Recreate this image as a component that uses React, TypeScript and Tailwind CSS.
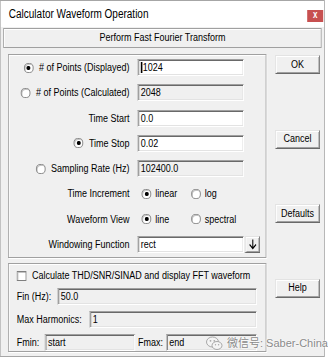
import clsx from "clsx";

// The dialog is laid out at its natural width and squeezed horizontally, as in the capture.

function Radio({ on }: { on?: boolean }) {
  return (
    <span className="flex h-[10px] w-[12px] shrink-0 items-center justify-center rounded-full border border-[#7f7f7f] bg-white shadow-[inset_1px_1px_0_#c4c4c4]">
      {on && <span className="h-[4px] w-[5px] rounded-full bg-black" />}
    </span>
  );
}

function Field({
  value,
  disabled,
  caret,
  className,
}: {
  value: string;
  disabled?: boolean;
  caret?: boolean;
  className?: string;
}) {
  return (
    <div
      className={clsx(
        "flex h-[17px] items-center border border-t-[#a0a0a0] border-l-[#a0a0a0] border-b-white border-r-white pl-[3px] shadow-[inset_1px_1px_0_#696969,inset_-1px_-1px_0_#e3e3e3]",
        disabled ? "bg-[#f0f0f0]" : "bg-white",
        className,
      )}
    >
      {caret && <span className="mr-[1px] h-[11px] w-[1.5px] bg-black" />}
      <span>{value}</span>
    </div>
  );
}

function Button({ label }: { label: string }) {
  return (
    <button
      type="button"
      className="flex h-[19px] w-[56px] items-center justify-center border border-t-[#e3e3e3] border-l-[#e3e3e3] border-b-[#696969] border-r-[#696969] bg-[#f0f0f0] shadow-[inset_1px_1px_0_#fff,inset_-1px_-1px_0_#a0a0a0]"
    >
      {label}
    </button>
  );
}

function Row({ children }: { children: React.ReactNode }) {
  return <div className="flex h-[25.25px] items-center">{children}</div>;
}

function Label({ text, radio }: { text: string; radio?: "on" | "off" }) {
  return (
    <div className="flex w-[151px] items-center justify-end gap-[7px]">
      {radio && <Radio on={radio === "on"} />}
      <span>{text}</span>
    </div>
  );
}

function Option({ text, on }: { text: string; on?: boolean }) {
  return (
    <div className="flex w-[62px] items-center gap-[5px]">
      <Radio on={on} />
      <span>{text}</span>
    </div>
  );
}

const groupBox =
  "border border-[#a0a0a0] shadow-[inset_1px_1px_0_#fff,1px_1px_0_#fff]";

export default function App() {
  return (
    <div className="relative h-[359px] w-[328px] overflow-hidden bg-white">
      <div className="h-[359px] w-[410px] origin-top-left scale-x-[0.8] font-['Liberation_Sans',Arial,sans-serif] text-[11.25px] leading-none text-black">
        <div className="flex h-[357px] w-[406px] flex-col border border-[#a6a6a6]">
          {/* title bar */}
          <div className="flex h-[26px] items-start justify-between bg-white">
            <span className="ml-[10px] mt-[7px] text-[12.5px]">Calculator Waveform Operation</span>
            <span className="mr-[1px] mt-[9px] flex h-[12px] w-[20px] items-center justify-center bg-[#c75050] pb-[2px] text-[10px] font-bold text-white">
              x
            </span>
          </div>

          <div className="flex flex-1 flex-col bg-[#f0f0f0] px-[3px] pt-[1px]">
            <div className="flex h-[20px] items-center justify-center border border-[#a0a0a0] shadow-[inset_1px_1px_0_#fff]">
              Perform Fast Fourier Transform
            </div>

            <div className="ml-[6px] mt-[6px] flex">
              <div className="flex w-[323px] flex-col">
                <div className={clsx("flex h-[204px] flex-col pl-0", groupBox)}>
                  <Row>
                    <Label text="# of Points (Displayed)" radio="on" />
                    <Field value="1024" caret className="ml-[10px] w-[133px] pl-[2px]" />
                  </Row>
                  <Row>
                    <Label text="# of Points (Calculated)" radio="off" />
                    <Field value="2048" disabled className="ml-[10px] w-[133px]" />
                  </Row>
                  <Row>
                    <Label text="Time Start" />
                    <Field value="0.0" className="ml-[10px] w-[133px]" />
                  </Row>
                  <Row>
                    <Label text="Time Stop" radio="on" />
                    <Field value="0.02" className="ml-[10px] w-[133px]" />
                  </Row>
                  <Row>
                    <Label text="Sampling Rate (Hz)" radio="off" />
                    <Field value="102400.0" disabled className="ml-[10px] w-[133px]" />
                  </Row>
                  <Row>
                    <Label text="Time Increment" />
                    <div className="ml-[10px] flex items-center pl-[5px]">
                      <Option text="linear" on />
                      <Option text="log" />
                    </div>
                  </Row>
                  <Row>
                    <Label text="Waveform View" />
                    <div className="ml-[10px] flex items-center pl-[5px]">
                      <Option text="line" on />
                      <Option text="spectral" />
                    </div>
                  </Row>
                  <Row>
                    <Label text="Windowing Function" />
                    <Field value="rect" className="ml-[10px] w-[133px]" />
                    <button
                      type="button"
                      className="ml-[1px] flex h-[17px] w-[19px] items-center justify-center border border-t-[#e3e3e3] border-l-[#e3e3e3] border-b-[#696969] border-r-[#696969] bg-[#f0f0f0] shadow-[inset_1px_1px_0_#fff,inset_-1px_-1px_0_#a0a0a0]"
                    >
                      <svg width="12" height="12" viewBox="0 0 12 12" fill="none" stroke="#000" strokeWidth="1.3">
                        <path d="M6 1.5V10.5M2 6.5L6 10.5L10 6.5" />
                      </svg>
                    </button>
                  </Row>
                </div>

                <div className={clsx("mt-[5px] flex h-[89px] flex-col pl-[10px] pr-[11px] pt-[2px]", groupBox)}>
                  <div className="flex h-[20px] items-center gap-[7px]">
                    <span className="h-[10px] w-[12px] border border-[#7f7f7f] bg-white shadow-[inset_1px_1px_0_#c4c4c4]" />
                    <span>Calculate THD/SNR/SINAD and display FFT waveform</span>
                  </div>
                  <div className="mt-[2px] flex flex-col gap-[6px]">
                    <div className="flex items-center">
                      <span className="w-[51px]">Fin (Hz):</span>
                      <Field value="50.0" disabled className="flex-1" />
                    </div>
                    <div className="flex items-center">
                      <span className="w-[91px]">Max Harmonics:</span>
                      <Field value="1" disabled className="flex-1" />
                    </div>
                    <div className="flex items-center">
                      <span className="w-[35px]">Fmin:</span>
                      <Field value="start" disabled className="w-[113px]" />
                      <span className="ml-[3.5px] w-[35px]">Fmax:</span>
                      <Field value="end" disabled className="flex-1" />
                    </div>
                  </div>
                </div>
              </div>

              <div className="ml-[11px] mt-[1px] flex flex-col gap-[55.5px]">
                <Button label="OK" />
                <Button label="Cancel" />
                <Button label="Defaults" />
                <Button label="Help" />
              </div>
            </div>
          </div>
        </div>
      </div>

      {/* watermark laid over the dialog */}
      <div className="absolute left-[206px] top-[336px] flex items-center gap-[4px] whitespace-nowrap font-['Liberation_Sans','Noto_Sans_CJK_SC',sans-serif] text-[11px] leading-none text-[#8a8a8a] [text-shadow:0_0_2px_#fff,0_0_2px_#fff]">
        <svg width="17" height="15" viewBox="0 0 17 15">
          <ellipse cx="6.5" cy="6" rx="6" ry="5" fill="#f4f4f4" stroke="#a8a8a8" strokeWidth="1" />
          <ellipse cx="11" cy="9.5" rx="5" ry="4" fill="#f4f4f4" stroke="#a8a8a8" strokeWidth="1" />
          <circle cx="4.5" cy="4.8" r="0.9" fill="#a8a8a8" />
          <circle cx="8.3" cy="4.8" r="0.9" fill="#a8a8a8" />
          <circle cx="9.5" cy="8.8" r="0.7" fill="#a8a8a8" />
          <circle cx="12.6" cy="8.8" r="0.7" fill="#a8a8a8" />
        </svg>
        <span>微信号: Saber-China</span>
      </div>
    </div>
  );
}
